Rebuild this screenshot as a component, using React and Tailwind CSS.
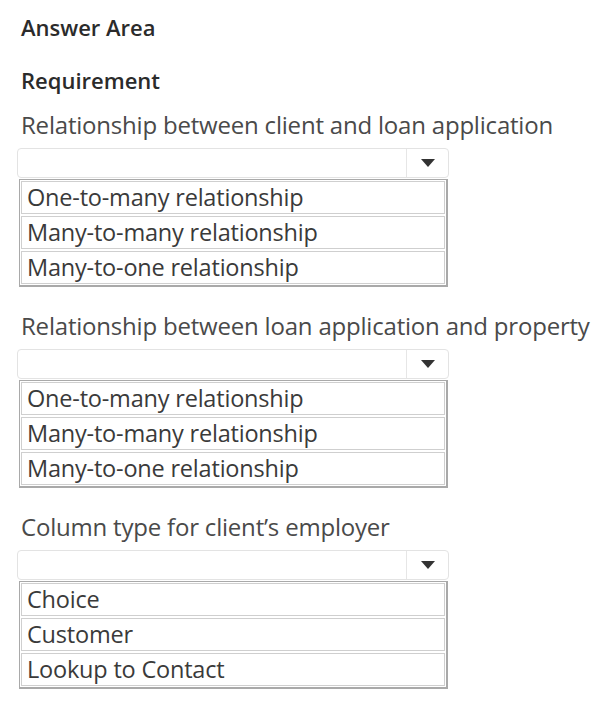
import { Fragment } from 'react';

const requirements = [
  {
    label: 'Relationship between client and loan application',
    options: ['One-to-many relationship', 'Many-to-many relationship', 'Many-to-one relationship'],
  },
  {
    label: 'Relationship between loan application and property',
    options: ['One-to-many relationship', 'Many-to-many relationship', 'Many-to-one relationship'],
  },
  {
    label: 'Column type for client\u2019s employer',
    options: ['Choice', 'Customer', 'Lookup to Contact'],
  },
];

function DropdownAnswer({ label, options }) {
  return (
    <div className="h-[201px]">
      <p className="h-[43px] pt-[5px] text-[24px] leading-[30px] tracking-[-0.2px] text-[#4a4a4a]">{label}</p>

      {/* Closed select box */}
      <div className="ml-[-4px] flex h-[30px] w-[432px] rounded-[4px] border border-[#e3e3e3] bg-white">
        <div className="flex-1" />
        <div className="flex w-[42px] items-center justify-center border-l border-[#e6e6e6]">
          <svg width="14" height="8" viewBox="0 0 14 8">
            <path d="M0 0 L14 0 L7 8 Z" fill="#333333" />
          </svg>
        </div>
      </div>

      {/* Options table */}
      <div className="mt-[1px] ml-[-2px] w-[429px] border border-[#a9a9a9] border-r-2 border-b-2 p-[1px]">
        {options.map((opt, i) => (
          <Fragment key={opt}>
            {i > 0 && <div className="h-[2px]" />}
            <div className="h-[33px] border border-[#cfcfcf] pl-[5px] text-[23.5px] leading-[31px] tracking-[-0.2px] text-[#3a3a3a]">
              {opt}
            </div>
          </Fragment>
        ))}
      </div>
    </div>
  );
}

export default function App() {
  return (
    <div
      className="min-h-[706px] w-[600px] bg-white pl-[21px] pt-[12px]"
      style={{ fontFamily: '"Open Sans", "Noto Sans", sans-serif' }}
    >
      <h1 className="h-[30px] text-[22px] font-semibold leading-[30px] text-[#2b2b2b]">Answer Area</h1>
      <h2 className="mt-[23px] h-[30px] text-[22px] font-semibold leading-[30px] text-[#2b2b2b]">Requirement</h2>
      <div className="mt-[10px]">
        {requirements.map((r) => (
          <DropdownAnswer key={r.label} label={r.label} options={r.options} />
        ))}
      </div>
    </div>
  );
}
